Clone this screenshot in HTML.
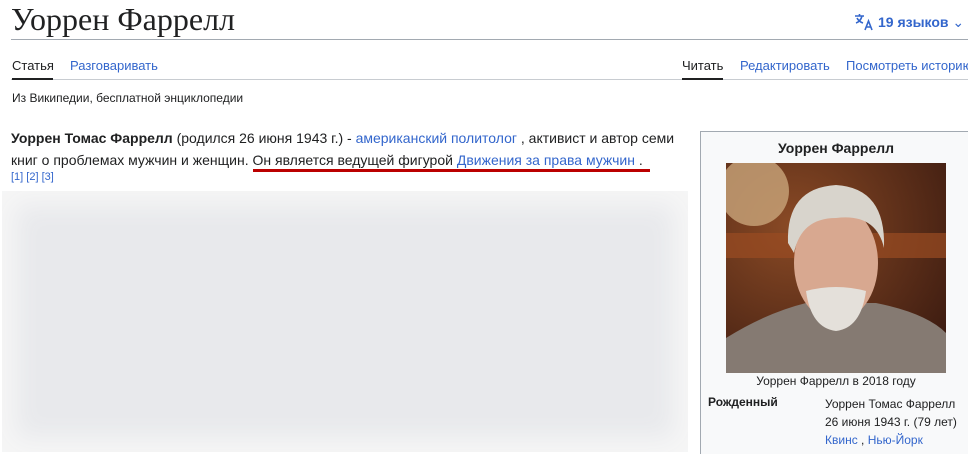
<!DOCTYPE html><html style="height:454px;overflow:hidden"><head><meta charset="utf-8"><style>
body{margin:0;width:968px;height:454px;overflow:hidden;background:#fff;font-family:"Liberation Sans",sans-serif;color:#202122;position:relative}
.a{position:absolute;white-space:nowrap}
a,.l{color:#3366cc;text-decoration:none}
</style></head><body>
<div class="a" style="left:11px;top:1px;font-family:'Liberation Serif',serif;font-size:32px;">Уоррен Фаррелл</div>
<div class="a" style="left:11px;top:39px;width:957px;height:1px;background:#a2a9b1"></div>
<div class="a" style="left:854px;top:13px;font-size:14px;font-weight:bold;color:#36c">
<svg width="20" height="18" viewBox="0 0 20 18" style="vertical-align:-4px;margin-right:4px"><g fill="none" stroke="#36c" stroke-width="1.6"><path d="M1 3h9M5.5 1v2M8 3c-1 4-3 6-6 7M3 5c1 2 3 4 6 5"/><path d="M11 17l3.5-9 3.5 9M12 14h5"/></g></svg>19 языков <span style="font-weight:normal">&#8964;</span></div>
<div class="a" style="left:11px;top:79px;width:957px;height:1px;background:#c8ccd1"></div>
<div class="a" style="left:12px;top:58px;font-size:13px">Статья</div>
<div class="a" style="left:12px;top:78px;width:41px;height:2px;background:#202122"></div>
<div class="a l" style="left:70px;top:58px;font-size:13px">Разговаривать</div>
<div class="a" style="left:682px;top:58px;font-size:13px">Читать</div>
<div class="a" style="left:682px;top:78px;width:41px;height:2px;background:#202122"></div>
<div class="a l" style="left:740px;top:58px;font-size:13px">Редактировать</div>
<div class="a l" style="left:846px;top:58px;font-size:13px">Посмотреть историю</div>
<div class="a" style="left:12px;top:91px;font-size:12px">Из Википедии, бесплатной энциклопедии</div>
<div class="a" style="left:11px;top:127px;font-size:14px;line-height:22px"><b>Уоррен Томас Фаррелл</b> (родился 26 июня 1943 г.) - <span class="l">американский политолог</span> , активист и автор семи<br>книг о проблемах мужчин и женщин. Он является ведущей фигурой <span class="l">Движения за права мужчин</span> .</div>
<div class="a l" style="left:11px;top:171px;font-size:11px">[1] [2] [3]</div>
<div class="a" style="left:253px;top:169px;width:397px;height:3px;background:#b00"></div>
<div class="a" style="left:2px;top:191px;width:686px;height:261px;background:#e8e9ec;box-shadow:inset 0 0 25px 14px #f6f6f6"></div>
<div class="a" style="left:700px;top:131px;width:280px;height:322px;background:#f8f9fa;border:1px solid #a2a9b1;border-bottom:none"></div>
<div class="a" style="left:726px;top:140px;width:220px;text-align:center;font-size:14px;font-weight:bold">Уоррен Фаррелл</div>
<svg class="a" style="left:726px;top:163px" width="220" height="210" viewBox="0 0 220 210">
<defs><radialGradient id="bg" cx=".3" cy=".3" r=".9"><stop offset="0" stop-color="#8a4a25"/><stop offset="1" stop-color="#3a1a10"/></radialGradient></defs>
<rect width="220" height="210" fill="url(#bg)"/>
<circle cx="28" cy="28" r="35" fill="#c9a57a" opacity=".8"/>
<rect y="70" width="220" height="25" fill="#9a4c22" opacity=".7"/>
<path d="M0 175 Q40 150 80 140 L150 140 Q200 150 220 170 V210 H0Z" fill="#857a72"/>
<ellipse cx="110" cy="100" rx="42" ry="58" fill="#d8a890"/>
<path d="M62 80 Q60 25 110 22 Q160 25 158 85 Q150 50 110 55 Q75 55 68 90Z" fill="#d8d4cc"/>
<path d="M80 128 Q110 120 140 128 Q135 165 110 168 Q85 165 80 128Z" fill="#e4e0da"/>
</svg>
<div class="a" style="left:726px;top:374px;width:220px;text-align:center;font-size:12px">Уоррен Фаррелл в 2018 году</div>
<div class="a" style="left:708px;top:395px;font-size:12px;font-weight:bold">Рожденный</div>
<div class="a" style="left:825px;top:395px;font-size:12px;line-height:18px">Уоррен Томас Фаррелл<br>26 июня 1943 г. (79 лет)<br><span class="l">Квинс</span> , <span class="l">Нью-Йорк</span></div>
</body></html>
